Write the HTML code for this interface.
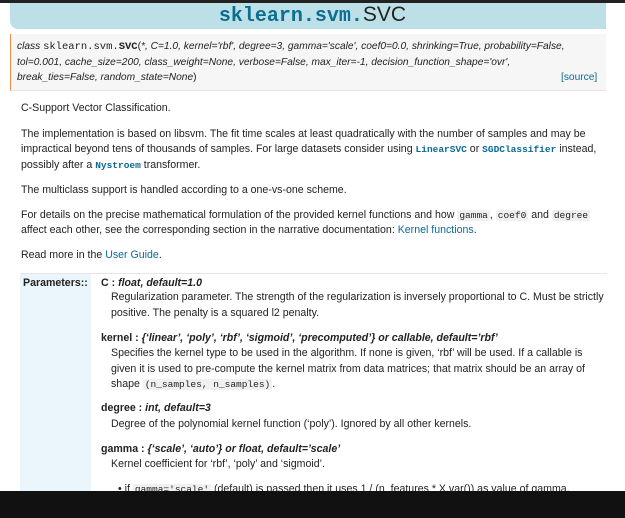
<!DOCTYPE html>
<html><head><meta charset="utf-8"><style>
body{margin:0;width:625px;height:518px;overflow:hidden;background:#fff;font-family:"Liberation Sans",sans-serif;color:#222;font-size:10.6px;position:relative}
.l{position:absolute;white-space:nowrap;line-height:13px}
code,.m{font-family:"Liberation Mono",monospace;font-size:9.5px}
.c{background:#f0f0f0;border-radius:2px;padding:0 2px}
.a{color:#0a6a95}
.b{color:#0a6a95;font-weight:bold;font-family:"Liberation Mono",monospace;font-size:9.5px}
i{font-style:italic}
</style></head><body>
<div style="position:absolute;left:0;top:0;width:625px;height:3px;background:#222"></div>
<div style="position:absolute;left:10px;top:3px;width:596px;height:26px;background:#bde0e8;border-bottom-left-radius:8px"></div>
<div class="l" style="left:0;width:625px;text-align:center;top:3px;line-height:24px;font-size:21px"><span style="font-family:'Liberation Mono',monospace;font-weight:bold;color:#0b6e8e;font-size:20px">sklearn.svm.</span>SVC</div>
<div style="position:absolute;left:10px;top:34px;width:595px;height:56px;background:#f6f6f6;border-left:1px solid #f08a4b;border-bottom:1px solid #e4e4e4"></div>
<div class="l" style="left:17px;top:40px;font-size:10.2px"><i>class</i> <span class="m" style="font-size:10.5px">sklearn.svm.</span><b class="m" style="font-size:10.5px">SVC</b>(<i>*, C=1.0, kernel='rbf', degree=3, gamma='scale', coef0=0.0, shrinking=True, probability=False,</i></div>
<div class="l" style="left:17px;top:56px;font-size:10.2px"><i>tol=0.001, cache_size=200, class_weight=None, verbose=False, max_iter=-1, decision_function_shape='ovr',</i></div>
<div class="l" style="left:17px;top:71px;font-size:10.2px"><i>break_ties=False, random_state=None</i>)</div>
<div class="l a" style="left:561px;top:71px;font-size:10.2px">[source]</div>

<div class="l" style="left:21px;top:102px">C-Support Vector Classification.</div>
<div class="l" style="left:21px;top:128px">The implementation is based on libsvm. The fit time scales at least quadratically with the number of samples and may be</div>
<div class="l" style="left:21px;top:143px">impractical beyond tens of thousands of samples. For large datasets consider using <span class="b">LinearSVC</span> or <span class="b">SGDClassifier</span> instead,</div>
<div class="l" style="left:21px;top:159px">possibly after a <span class="b">Nystroem</span> transformer.</div>
<div class="l" style="left:21px;top:184px">The multiclass support is handled according to a one-vs-one scheme.</div>
<div class="l" style="left:21px;top:209px">For details on the precise mathematical formulation of the provided kernel functions and how <code class="c">gamma</code>, <code class="c">coef0</code> and <code class="c">degree</code></div>
<div class="l" style="left:21px;top:224px">affect each other, see the corresponding section in the narrative documentation: <span class="a">Kernel functions</span>.</div>
<div class="l" style="left:21px;top:249px">Read more in the <span class="a">User Guide</span>.</div>

<div style="position:absolute;left:20px;top:273px;width:587px;height:1px;background:#e6e6e6"></div>
<div style="position:absolute;left:20px;top:274px;width:71px;height:217px;background:#eaf6fb"></div>
<div class="l" style="left:23px;top:277px;font-weight:bold">Parameters::</div>
<div class="l" style="left:101px;top:277px"><b>C :</b> <b><i>float, default=1.0</i></b></div>
<div class="l" style="left:111px;top:291px">Regularization parameter. The strength of the regularization is inversely proportional to C. Must be strictly</div>
<div class="l" style="left:111px;top:307px">positive. The penalty is a squared l2 penalty.</div>
<div class="l" style="left:101px;top:332px"><b>kernel :</b> <b><i>{‘linear’, ‘poly’, ‘rbf’, ‘sigmoid’, ‘precomputed’} or callable, default=’rbf’</i></b></div>
<div class="l" style="left:111px;top:347px">Specifies the kernel type to be used in the algorithm. If none is given, ‘rbf’ will be used. If a callable is</div>
<div class="l" style="left:111px;top:363px">given it is used to pre-compute the kernel matrix from data matrices; that matrix should be an array of</div>
<div class="l" style="left:111px;top:378px">shape <code class="c">(n_samples, n_samples)</code>.</div>
<div class="l" style="left:101px;top:402px"><b>degree :</b> <b><i>int, default=3</i></b></div>
<div class="l" style="left:111px;top:418px">Degree of the polynomial kernel function (‘poly’). Ignored by all other kernels.</div>
<div class="l" style="left:101px;top:443px"><b>gamma :</b> <b><i>{‘scale’, ‘auto’} or float, default=’scale’</i></b></div>
<div class="l" style="left:111px;top:458px">Kernel coefficient for ‘rbf’, ‘poly’ and ‘sigmoid’.</div>
<div class="l" style="left:118px;top:483px">• if <code class="c">gamma='scale'</code> (default) is passed then it uses 1 / (n_features * X.var()) as value of gamma,</div>
<div style="position:absolute;left:0;top:491px;width:625px;height:27px;background:#111"></div>
</body></html>
